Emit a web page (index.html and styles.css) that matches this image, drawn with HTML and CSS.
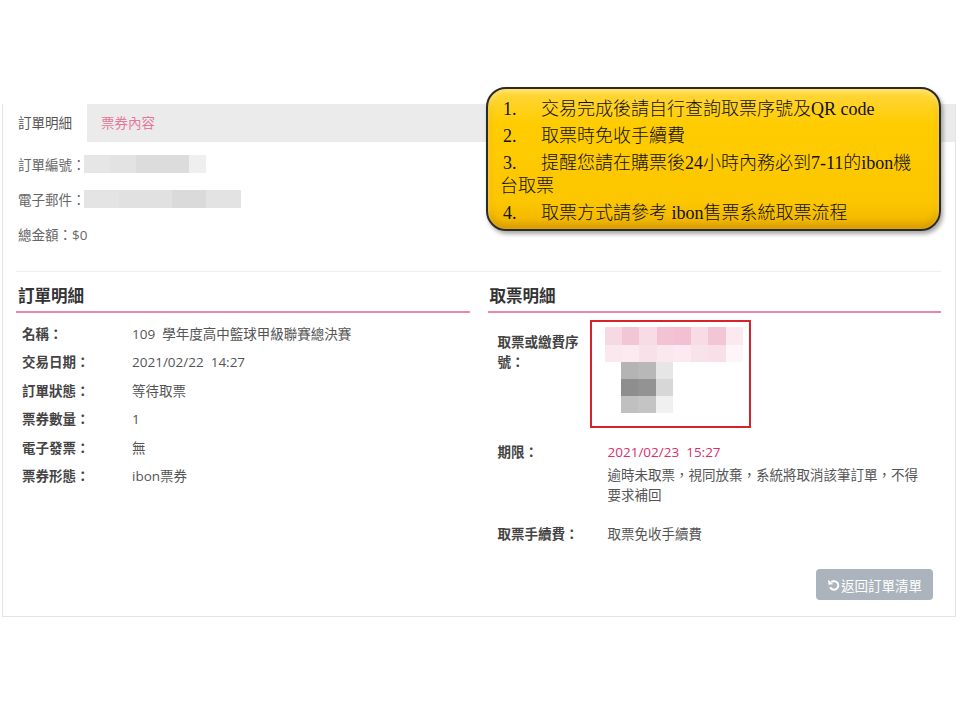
FILE: index.html
```html
<!DOCTYPE html>
<html lang="zh-TW">
<head>
    <meta charset="UTF-8">
    <meta name="viewport" content="width=device-width, initial-scale=1.0">
    <title>訂單明細</title>
    <link rel="stylesheet" href="styles.css">
</head>
<body>
    <div class="panel">
        <div class="tabs">
            <div class="tab active">訂單明細</div>
            <div class="tab">票券內容</div>
        </div>

        <div class="summary">
            <div class="sum-row"><span>訂單編號：</span><span class="blur blur-order"></span></div>
            <div class="sum-row"><span>電子郵件：</span><span class="blur blur-mail"></span></div>
            <div class="sum-row"><span>總金額：$0</span></div>
        </div>

        <div class="columns">
            <section class="col">
                <h2>訂單明細</h2>
                <div class="rows order-rows">
                    <div class="row"><div class="label">名稱：</div><div class="value">109&nbsp; 學年度高中籃球甲級聯賽總決賽</div></div>
                    <div class="row"><div class="label">交易日期：</div><div class="value">2021/02/22&nbsp; 14:27</div></div>
                    <div class="row"><div class="label">訂單狀態：</div><div class="value">等待取票</div></div>
                    <div class="row"><div class="label">票券數量：</div><div class="value">1</div></div>
                    <div class="row"><div class="label">電子發票：</div><div class="value">無</div></div>
                    <div class="row"><div class="label">票券形態：</div><div class="value">ibon票券</div></div>
                </div>
            </section>

            <section class="col">
                <h2>取票明細</h2>
                <div class="rows ticket-rows">
                    <div class="row serial-row">
                        <div class="label">取票或繳費序號：</div>
                        <div class="serial-box">
                            <div class="code-line code-top"></div>
                            <div class="code-line code-bottom"></div>
                            <div class="qr">
                                <div class="qr-line qr-1"></div>
                                <div class="qr-line qr-2"></div>
                                <div class="qr-line qr-3"></div>
                            </div>
                        </div>
                    </div>
                    <div class="row deadline-row">
                        <div class="label">期限：</div>
                        <div class="value">
                            <div class="deadline">2021/02/23&nbsp; 15:27</div>
                            <div class="note">逾時未取票，視同放棄，系統將取消該筆訂單，不得要求補回</div>
                        </div>
                    </div>
                    <div class="row fee-row">
                        <div class="label">取票手續費：</div>
                        <div class="value">取票免收手續費</div>
                    </div>
                </div>
                <div class="actions">
                    <button class="back-btn">
                        <svg class="back-icon" viewBox="0 0 14 14" width="13" height="13">
                            <path d="M4.6 4.4 A4.6 4.6 0 1 1 3.4 10" fill="none" stroke="#fff" stroke-width="2.2"/>
                            <polygon points="1.2,1.8 1.6,7.2 6.8,6.6" fill="#fff"/>
                        </svg>返回訂單清單
                    </button>
                </div>
            </section>
        </div>
    </div>

    <!-- 黃色提示框 -->
    <div class="notice">
        <p><span class="num">1.</span>交易完成後請自行查詢取票序號及QR code</p>
        <p><span class="num">2.</span>取票時免收手續費</p>
        <p><span class="num">3.</span>提醒您請在購票後24小時內務必到7-11的ibon機<br>台取票</p>
        <p><span class="num">4.</span>取票方式請參考 ibon售票系統取票流程</p>
    </div>
</body>
</html>
```

FILE: styles.css
```css
body {
    margin: 0;
    background: #fff;
    font-family: "Open Sans", "Noto Sans CJK TC", sans-serif;
    font-size: 13.5px;
    color: #555;
}
.panel {
    box-sizing: border-box;
    width: 954px;
    margin: 104px 0 0 2px;
    border: 1px solid #e4e4e4;
    border-top: none;
}
.tabs {
    display: flex;
    height: 38px;
    background: #ebebeb;
}
.tab {
    line-height: 38px;
    padding: 0 14px;
    color: #e5799c;
}
.tab.active {
    background: #fff;
    color: #555;
    padding: 0 15px;
}
.summary {
    margin: 0 14px 0 13px;
    padding: 4px 2px 20px;
    border-bottom: 1px solid #eee;
    color: #666;
}
.sum-row {
    display: flex;
    align-items: center;
    height: 35px;
}
.blur {
    display: inline-block;
    height: 18px;
}
.blur-order {
    width: 122px;
    margin-left: -2px;
    background: linear-gradient(90deg, #e6e6e6 0 26px, #e3e3e3 26px 52px, #dcdcdc 52px 105px, #efefef 105px);
}
.blur-mail {
    width: 157px;
    margin-left: -2px;
    background: linear-gradient(90deg, #e4e4e4 0 35px, #e1e1e1 35px 88px, #dadada 88px 122px, #e3e3e3 122px);
}
.columns {
    display: grid;
    grid-template-columns: 1fr 1fr;
    gap: 18px;
    margin: 0 14px 0 13px;
}
h2 {
    margin: 0;
    padding: 13px 0 5px 2px;
    font-size: 16.5px;
    line-height: 21px;
    color: #333;
    border-bottom: 2px solid #ea88a6;
}
.rows {
    padding-top: 7px;
}
.order-rows {
    padding-left: 6px;
}
.ticket-rows {
    padding-left: 10px;
}
.row {
    display: flex;
    line-height: 28.4px;
}
.label {
    flex: none;
    width: 110px;
    font-weight: bold;
    color: #444;
}
.value {
    color: #555;
}
.ticket-rows .row {
    line-height: 20px;
    align-items: flex-start;
}
.serial-row .label {
    box-sizing: border-box;
    padding: 12px 22px 0 0;
}
.serial-box {
    box-sizing: border-box;
    width: 161px;
    height: 108px;
    margin-left: -18px;
    border: 2px solid #d8232f;
    padding: 5px 0 0 13px;
}
.code-line {
    width: 138px;
    height: 18px;
}
.code-top {
    background: linear-gradient(90deg, #f7d9e3 0 17px, #f3c6d6 17px 34px, #f7dbe5 34px 52px, #f3c3d4 52px 69px, #f2c0d2 69px 86px, #f7dce6 86px 103px, #f3c6d6 103px 121px, #fae9ef 121px);
}
.code-bottom {
    height: 17px;
    background: linear-gradient(90deg, #fbe7ee 0 17px, #fbeaf0 17px 34px, #f9e1e9 34px 52px, #fbe8ef 52px 69px, #fbeaf0 69px 86px, #f9e3eb 86px 103px, #f8dfe8 103px 121px, #fdf5f8 121px);
}
.qr {
    margin-left: 16px;
}
.qr-line {
    width: 52px;
    height: 17px;
}
.qr-1 {
    background: linear-gradient(90deg, #b4b4b4 0 17px, #b8b8b8 17px 35px, #e6e6e6 35px);
}
.qr-2 {
    background: linear-gradient(90deg, #8e8e8e 0 17px, #939393 17px 35px, #d7d7d7 35px);
}
.qr-3 {
    background: linear-gradient(90deg, #c0c0c0 0 17px, #c4c4c4 17px 35px, #f0f0f0 35px);
}
.deadline-row {
    margin-top: 14px;
}
.deadline {
    color: #d9306a;
}
.note {
    width: 320px;
    margin-top: 2px;
    font-family: "Noto Sans CJK TC", sans-serif;
}
.fee-row {
    margin-top: 20px;
}
.actions {
    display: flex;
    justify-content: flex-end;
    padding: 25px 8px 16px 0;
}
.back-btn {
    display: flex;
    align-items: center;
    justify-content: center;
    gap: 1px;
    width: 117px;
    height: 31px;
    border: none;
    border-radius: 4px;
    background: #abb3bc;
    color: #fff;
    font-family: "Open Sans", "Noto Sans CJK TC", sans-serif;
    font-size: 13.5px;
    cursor: pointer;
}
.notice {
    position: absolute;
    left: 486px;
    top: 87px;
    box-sizing: border-box;
    width: 455px;
    height: 144px;
    padding: 9px 12px 0;
    border: 2px solid #2a2a2a;
    border-radius: 20px;
    background: linear-gradient(#ffd740, #ffcc00 25%, #fcc600 80%, #f0b400);
    box-shadow: 2px 3px 4px rgba(0, 0, 0, 0.35), inset 0 3px 5px rgba(255, 240, 150, 0.6), inset 0 -5px 6px rgba(170, 110, 0, 0.35);
    font-family: "Liberation Serif", "Noto Sans CJK TC", serif;
    font-size: 18px;
    font-weight: 300;
    color: #111;
}
.notice p {
    margin: 0 0 4px;
    line-height: 23px;
}
.num {
    display: inline-block;
    width: 38px;
    padding-left: 3px;
}
```
